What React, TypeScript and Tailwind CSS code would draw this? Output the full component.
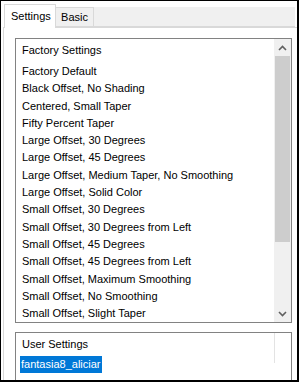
const items = [
  "Factory Default",
  "Black Offset, No Shading",
  "Centered, Small Taper",
  "Fifty Percent Taper",
  "Large Offset, 30 Degrees",
  "Large Offset, 45 Degrees",
  "Large Offset, Medium Taper, No Smoothing",
  "Large Offset, Solid Color",
  "Small Offset, 30 Degrees",
  "Small Offset, 30 Degrees from Left",
  "Small Offset, 45 Degrees",
  "Small Offset, 45 Degrees from Left",
  "Small Offset, Maximum Smoothing",
  "Small Offset, No Smoothing",
  "Small Offset, Slight Taper",
];

const Chevron = ({ down }: { down?: boolean }) => (
  <svg width="9" height="6" viewBox="0 0 9 6" className={down ? "" : "rotate-180"}>
    <path d="M1 1 L4.5 4.5 L8 1" fill="none" stroke="#606060" strokeWidth="1.6" />
  </svg>
);

const App = () => {
  return (
    <div className="w-[299px] h-[382px] bg-white border-black border-t border-l border-r-2 border-b-2 overflow-hidden font-['Liberation_Sans',Arial,sans-serif] text-[11px] text-black">
      <div className="flex items-end pt-[2px] pl-[3px] pr-[2px] h-[26px]">
        <div className="relative z-10 h-[24px] w-[52px] bg-white border border-b-0 border-[#d9d9d9] flex items-center pl-[6px] -mb-px">
          Settings
        </div>
        <div className="h-[20px] w-[38px] bg-[#f0f0f0] border border-l-0 border-[#d9d9d9] flex items-center justify-center">
          Basic
        </div>
        <div className="flex-1 h-[20px] bg-[#f0f0f0] border-b border-[#d9d9d9]" />
      </div>

      <div className="ml-[2px] border-l border-t border-[#d9d9d9] h-[400px] pl-[11px] pt-[10px]">
        <div className="w-[277px] h-[285px] border border-[#828282] flex">
          <div className="flex-1 pl-[6px] pt-[3px]">
            <div className="h-[17px] leading-[17px]">Factory Settings</div>
            <div className="h-[4px]" />
            {items.map((t) => (
              <div key={t} className="h-[17.3px] leading-[17.3px] whitespace-nowrap">
                {t}
              </div>
            ))}
          </div>
          <div className="w-[17px] bg-[#f0f0f0] flex flex-col">
            <div className="h-[17px] flex items-center justify-center">
              <Chevron />
            </div>
            <div className="h-[186px] mx-px bg-[#cdcdcd]" />
            <div className="flex-1" />
            <div className="h-[17px] flex items-center justify-center">
              <Chevron down />
            </div>
          </div>
        </div>

        <div className="mt-[9px] w-[277px] h-[60px] border border-[#828282] flex">
          <div className="flex-1 pl-[4px] pt-[3px]">
            <div className="h-[17px] leading-[17px] pl-[2px]">User Settings</div>
            <div className="mt-[3px] inline-block h-[17px] leading-[17px] px-[1px] bg-[#0078d7] text-white">
              fantasia8_aliciar
            </div>
          </div>
          <div className="w-[17px] flex">
            <div className="w-px h-[30px] bg-[#e3e3e3]" />
          </div>
        </div>
      </div>
    </div>
  );
};

export default App;
